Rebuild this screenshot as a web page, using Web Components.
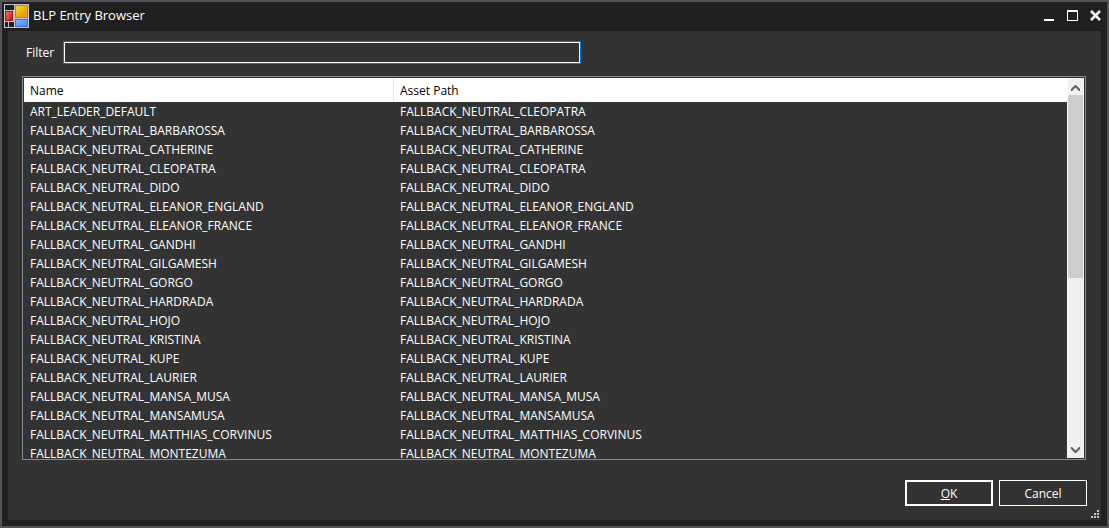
<!DOCTYPE html>
<html lang="en">
<head>
<meta charset="utf-8">
<title>BLP Entry Browser</title>
<style>
  body { margin: 0; font: 12px/19px "Open Sans", "Noto Sans", sans-serif; color: #fff; background: #333; }
</style>
</head>
<body>
<blp-window></blp-window>
<script>
const define = (name, html, setup) => customElements.define(name, class extends HTMLElement {
  connectedCallback() {
    if (this.shadowRoot) return;
    const root = this.attachShadow({ mode: 'open' });
    root.innerHTML = html;
    if (setup) setup.call(this, root);
  }
});

define('app-icon', `
  <style>:host{display:block;width:25px;height:25px}svg{display:block}</style>
  <svg width="25" height="25" viewBox="0 0 25 25" aria-hidden="true">
    <defs>
      <linearGradient id="y" x2="1" y2="1"><stop stop-color="#ffd84a"/><stop offset=".5" stop-color="#eeb010"/><stop offset="1" stop-color="#d99400"/></linearGradient>
      <linearGradient id="r" x2="1" y2="1"><stop stop-color="#f08070"/><stop offset="1" stop-color="#b01010"/></linearGradient>
      <linearGradient id="b" x2="1" y2="1"><stop stop-color="#8fb8ff"/><stop offset="1" stop-color="#3f7fee"/></linearGradient>
    </defs>
    <rect width="25" height="24" fill="#c4c4c4"/>
    <path fill="#202020" d="M1 1h9v5H1zM1 18h3v5H1zM5 18h5v5H5z"/>
    <rect x="1" y="7" width="8" height="10" fill="url(#r)"/>
    <rect x="1.500" y="7.500" width="7" height="9" fill="none" stroke="#b81414"/>
    <rect x="11" y="1" width="13" height="13" fill="url(#y)"/>
    <rect x="11.500" y="1.500" width="12" height="12" fill="none" stroke="#c98c00"/>
    <rect x="11" y="15" width="13" height="8" fill="url(#b)"/>
    <rect x="11.500" y="15.500" width="12" height="7" fill="none" stroke="#3b74d8"/>
  </svg>`);

define('title-bar', `
  <style>
    :host{display:flex;align-items:flex-start;height:29px;padding:0 4px 0 2px}
    app-icon{margin:2px 4px 0 0}
    h1{margin:4px 0 0;font-size:13px;line-height:19px;font-weight:400;flex:1}
    nav{display:flex;gap:10px;padding-top:7px}
    button{width:13px;height:13px;padding:0;border:0;background:none}
    svg{display:block}
  </style>
  <app-icon></app-icon><h1><slot></slot></h1>
  <nav aria-label="Window">
    <button aria-label="Minimize"><svg width="13" height="13"><path fill="#fff" d="M0 10h10v2H0z"/></svg></button>
    <button aria-label="Maximize"><svg width="13" height="13"><path fill="#fff" fill-rule="evenodd" d="M0 1h11v11H0zM1 3v8h9V3z"/></svg></button>
    <button aria-label="Close"><svg width="13" height="13"><path stroke="#fff" stroke-width="2.500" d="M1 2l9 9M10 2l-9 9"/></svg></button>
  </nav>`);

define('filter-field', `
  <style>
    :host{display:flex;align-items:center}
    label{width:37px}
    input{box-sizing:border-box;width:518px;max-width:80%;height:23px;padding:0 4px;font:inherit;color:#fff;background:#333;border:1px solid #0078d7;outline:1px solid #fff;outline-offset:-2px;border-radius:0}
  </style>
  <label for="f"><slot></slot></label><input id="f" type="text">`);

define('scroll-rail', `
  <style>
    :host{display:flex;flex-direction:column;box-sizing:border-box;width:17px;background:#f0f0f0;border-left:1px solid #fff}
    button{flex:none;width:16px;height:17px;padding:0;border:0;background:none}
    svg{display:block}
    .track{flex:1}
    .thumb{width:15px;height:53%;background:#cdcdcd}
  </style>
  <button aria-label="Scroll up"><svg width="16" height="17"><path fill="#606060" d="M7 7h1l4 4v2h-1l-3.500-3.500L4 13H3v-2z"/></svg></button>
  <div class="track"><div class="thumb"></div></div>
  <button aria-label="Scroll down"><svg width="16" height="17"><path fill="#606060" d="M7 12h1l4-4V6h-1L7.500 9.500 4 6H3v2z"/></svg></button>`);

const leaders = ['BARBAROSSA','CATHERINE','CLEOPATRA','DIDO','ELEANOR_ENGLAND','ELEANOR_FRANCE','GANDHI','GILGAMESH','GORGO','HARDRADA','HOJO','KRISTINA','KUPE','LAURIER','MANSA_MUSA','MANSAMUSA','MATTHIAS_CORVINUS','MONTEZUMA'].map(n => 'FALLBACK_NEUTRAL_' + n);
const entries = [['ART_LEADER_DEFAULT', 'FALLBACK_NEUTRAL_CLEOPATRA'], ...leaders.map(n => [n, n])];

define('entry-list', `
  <style>
    :host{display:flex;min-height:0;border:1px solid #828790;padding:1px}
    .view{flex:1;min-width:0;overflow:hidden}
    table{width:100%;border-collapse:separate;border-spacing:0;table-layout:fixed}
    th,td{padding:0 6px;text-align:left;font-weight:400;white-space:nowrap;line-height:19px}
    th{height:24px;background:#fff;color:#000}
    th:first-child{width:357px;border-right:1px solid #e5e5e5}
  </style>
  <div class="view"><table><thead><tr><th scope="col">Name</th><th scope="col">Asset Path</th></tr></thead><tbody></tbody></table></div>
  <scroll-rail></scroll-rail>`, function (root) {
  const body = root.querySelector('tbody');
  for (const entry of entries) {
    const row = body.insertRow();
    for (const value of entry) row.insertCell().textContent = value;
  }
});

define('dialog-button', `
  <style>
    :host{display:block}
    button{width:88px;height:26px;padding:0;font:inherit;line-height:19px;color:#fff;background:#333;border:1px solid #fff;border-radius:0}
    :host([primary]) button{border-width:2px}
  </style>
  <button type="button"><slot></slot></button>`);

define('size-grip', `
  <style>:host{display:block}svg{display:block}</style>
  <svg width="8" height="8" aria-hidden="true"><path fill="#c4c4c4" d="M6 0h2v2H6zM3 3h2v2H3zM6 3h2v2H6zM0 6h2v2H0zM3 6h2v2H3zM6 6h2v2H6z"/></svg>`);

define('blp-window', `
  <style>
    :host{display:flex;flex-direction:column;box-sizing:border-box;height:100vh;border:2px solid #55545c;background:#202020}
    main{flex:1;min-height:0;display:flex;flex-direction:column;margin:0 6px 6px;padding:10px 15px 14px 14px;background:#333;position:relative}
    filter-field{margin:0 0 12px 4px}
    entry-list{flex:1}
    footer{display:flex;justify-content:flex-end;gap:6px;margin:20px -1px 0 0}
    size-grip{position:absolute;right:2px;bottom:2px}
  </style>
  <title-bar>BLP Entry Browser</title-bar>
  <main>
    <filter-field>Filter</filter-field>
    <entry-list></entry-list>
    <footer><dialog-button primary><u>O</u>K</dialog-button><dialog-button>Cancel</dialog-button></footer>
    <size-grip></size-grip>
  </main>`);
</script>
</body>
</html>
